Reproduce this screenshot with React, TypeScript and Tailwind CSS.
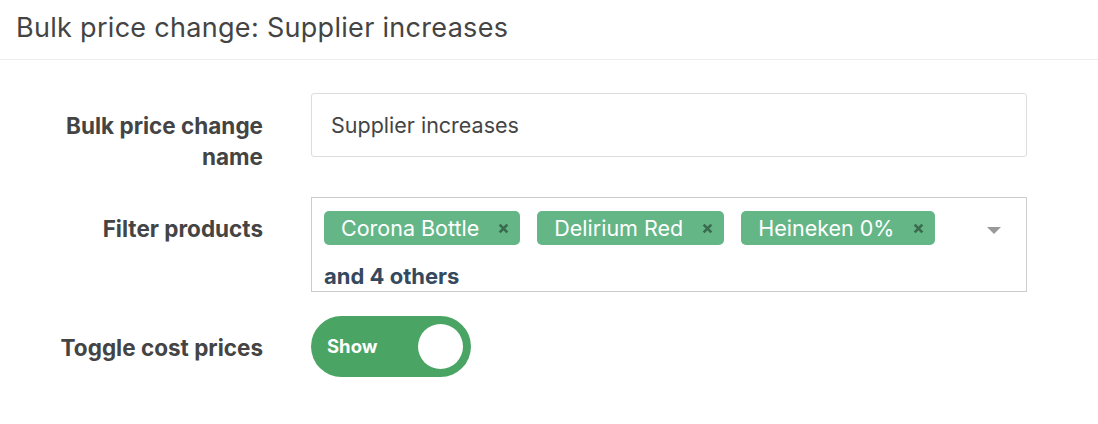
import React from 'react';

const tags = ['Corona Bottle', 'Delirium Red', 'Heineken 0%'];

const Tag: React.FC<{ label: string }> = ({ label }) => (
  <span className="flex h-[34px] items-center rounded-[5px] bg-[#64b687] pl-[17px] pr-[11px] text-[21.5px] text-white">
    <span>{label}</span>
    <svg className="ml-[19px] h-[11px] w-[11px] text-[#3b6b4f]" viewBox="0 0 10 10" fill="none" stroke="currentColor" strokeWidth="2.5">
      <path d="M1.5 1.5L8.5 8.5M8.5 1.5L1.5 8.5" />
    </svg>
  </span>
);

const App: React.FC = () => {
  return (
    <div className="min-h-screen w-[1098px] bg-white font-['Inter',sans-serif] text-[#444]">
      {/* Header */}
      <div className="h-[60px] border-b border-[#eee] px-4 pt-[14px]">
        <h1 className="text-[27px] leading-none tracking-[0.3px] text-[#444]">Bulk price change: Supplier increases</h1>
      </div>

      <div className="flex flex-col gap-6 pt-[33px]">
        {/* Name */}
        <div className="flex">
          <label className="w-[263px] pb-[1px] pt-[17px] text-right text-[22.5px] font-bold leading-[31px]">
            Bulk price change
            <br />
            name
          </label>
          <div className="ml-[48px] h-[64px] w-[716px] rounded-[3px] border border-[#ddd] px-[19px] text-[21.5px] leading-[62px]">
            Supplier increases
          </div>
        </div>

        {/* Filter */}
        <div className="flex">
          <label className="w-[263px] pt-[16px] text-right text-[22.5px] font-bold leading-[31px]">Filter products</label>
          <div className="relative ml-[48px] h-[95px] w-[716px] border border-[#ccc] pl-[12px] pt-[13px]">
            <div className="flex gap-[17px]">
              {tags.map((t) => (
                <Tag key={t} label={t} />
              ))}
            </div>
            <div className="mt-[20px] text-[22px] font-bold leading-none text-[#35495e]">and 4 others</div>
            <svg className="absolute right-[25px] top-[29px] h-[7px] w-[14px]" viewBox="0 0 14 7">
              <path d="M0 0H14L7 7Z" fill="#999" />
            </svg>
          </div>
        </div>

        {/* Toggle */}
        <div className="flex">
          <label className="w-[263px] pt-[16px] text-right text-[22.5px] font-bold leading-[31px]">Toggle cost prices</label>
          <div className="ml-[48px] flex h-[61px] w-[160px] items-center justify-between rounded-full bg-[#4aa463] pl-[16px] pr-[8px]">
            <span className="text-[18.5px] font-bold text-white">Show</span>
            <span className="h-[45px] w-[45px] rounded-full bg-white" />
          </div>
        </div>
      </div>
    </div>
  );
};

export default App;
